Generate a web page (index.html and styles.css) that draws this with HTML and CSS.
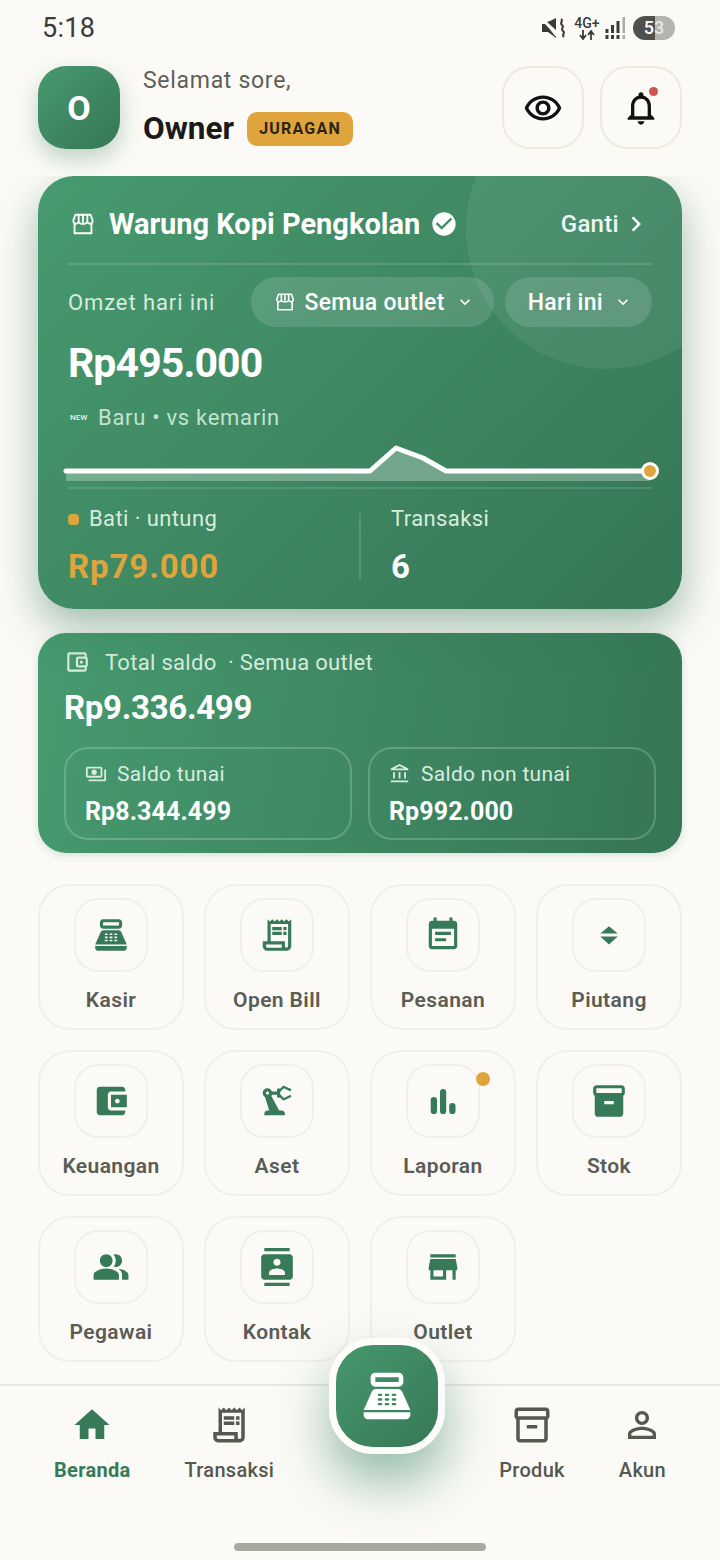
FILE: index.html
```html
<!DOCTYPE html>
<html lang="id">
<head>
    <meta charset="UTF-8">
    <meta name="viewport" content="width=device-width, initial-scale=1.0">
    <title>Beranda</title>
    <link rel="stylesheet" href="styles.css">
</head>
<body>
    <svg class="sprite" width="0" height="0">
        <symbol id="i-pos" viewBox="0 0 24 24"><path d="M17 2H7c-1.1 0-2 .9-2 2v2c0 1.1.9 2 2 2h10c1.1 0 2-.9 2-2V4c0-1.1-.9-2-2-2zm0 4H7V4h10v2zm3 16H4c-1.1 0-2-.9-2-2v-1h20v1c0 1.1-.9 2-2 2zm-1.47-11.81C18.21 9.47 17.49 9 16.7 9H7.3c-.79 0-1.51.47-1.83 1.19L2 18h20l-3.47-7.81zM9.5 16h-1c-.28 0-.5-.22-.5-.5s.22-.5.5-.5h1c.28 0 .5.22.5.5s-.22.5-.5.5zm0-2h-1c-.28 0-.5-.22-.5-.5s.22-.5.5-.5h1c.28 0 .5.22.5.5s-.22.5-.5.5zm0-2h-1c-.28 0-.5-.22-.5-.5s.22-.5.5-.5h1c.28 0 .5.22.5.5s-.22.5-.5.5zm3 4h-1c-.28 0-.5-.22-.5-.5s.22-.5.5-.5h1c.28 0 .5.22.5.5s-.22.5-.5.5zm0-2h-1c-.28 0-.5-.22-.5-.5s.22-.5.5-.5h1c.28 0 .5.22.5.5s-.22.5-.5.5zm0-2h-1c-.28 0-.5-.22-.5-.5s.22-.5.5-.5h1c.28 0 .5.22.5.5s-.22.5-.5.5zm3 4h-1c-.28 0-.5-.22-.5-.5s.22-.5.5-.5h1c.28 0 .5.22.5.5s-.22.5-.5.5zm0-2h-1c-.28 0-.5-.22-.5-.5s.22-.5.5-.5h1c.28 0 .5.22.5.5s-.22.5-.5.5zm0-2h-1c-.28 0-.5-.22-.5-.5s.22-.5.5-.5h1c.28 0 .5.22.5.5s-.22.5-.5.5z" fill-rule="evenodd"/></symbol>
        <symbol id="i-receipt" viewBox="0 0 24 24"><path d="M19.5 3.5L18 2l-1.5 1.5L15 2l-1.5 1.5L12 2l-1.5 1.5L9 2 7.5 3.5 6 2v14H3v3c0 1.66 1.34 3 3 3h12c1.66 0 3-1.34 3-3V2l-1.5 1.5zM15 20H6c-.55 0-1-.45-1-1v-1h10v2zm4-1c0 .55-.45 1-1 1s-1-.45-1-1v-3H8V5h11v14z"/><path d="M9 7h6v2H9zM16 7h2v2h-2zM9 10h6v2H9zM16 10h2v2h-2z"/></symbol>
        <symbol id="i-store" viewBox="0 0 24 24"><path d="M20 4H4v2h16V4zm1 10v-2l-1-5H4l-1 5v2h1v6h10v-6h4v6h2v-6h1zm-9 4H6v-4h6v4z"/></symbol>
        <symbol id="i-storefront" viewBox="0 0 24 24"><path d="M5 3.5h14l1.9 5.3c.3 1.7-1 3-2.4 3-1.1 0-2-.6-2.5-1.5-.5.9-1.5 1.5-2.6 1.5h-2.8c-1.1 0-2.1-.6-2.6-1.5-.5.9-1.4 1.5-2.5 1.5-1.4 0-2.7-1.3-2.4-3zM4.2 12v8.5h15.6V12M8 4v6M12 4v6.500M16 4v6" fill="none" stroke="currentColor" stroke-width="1.700" stroke-linejoin="round"/></symbol>
        <symbol id="i-inbox" viewBox="0 0 24 24"><path d="M20 2H4c-1 0-2 .9-2 2v3.010c0 .72.43 1.340 1 1.690V20c0 1.100 1.100 2 2 2h14c.9 0 2-.9 2-2V8.700c.57-.35 1-.97 1-1.690V4c0-1.100-1-2-2-2zm-1 18H5V9h14v11zm1-13H4V4h16v3zM9 12h6v2H9z"/></symbol>
    </svg>

    <div class="page">
        <div class="top">
            <div class="status-bar">
                <span class="clock">5:18</span>
                <div class="status-icons">
                    <svg class="ic-mute" viewBox="0 0 24 20"><path d="M0 6h3l11 11v3L6 14H0zM5 4l3-1 6-3v12z"/><path d="M1 1l13 17" stroke="#fbfaf6" stroke-width="1.500"/><path d="M19 1c3 2-2 4 1 6s-2 4 1 6-2 4 1 6" fill="none" stroke="#3a3a38" stroke-width="2"/></svg>
                    <div class="net">
                        <span class="net-type">4G+</span>
                        <svg class="ic-arrows" viewBox="0 0 16 10"><path d="M4 0v8M1 5l3 4 3-4M12 10V2M9 5l3-4 3 4" fill="none" stroke="#3a3a38" stroke-width="1.800"/></svg>
                    </div>
                    <svg class="ic-signal" viewBox="0 0 20 22"><rect x="0" y="12" width="3" height="4"/><rect x="0" y="18" width="3" height="4"/><rect x="5.500" y="8" width="3" height="8"/><rect x="5.500" y="18" width="3" height="4"/><rect x="11" y="4" width="3" height="12"/><rect x="11" y="18" width="3" height="4"/><rect x="17" y="0" width="2.500" height="16" fill="#a9a9a5"/><rect x="17" y="18" width="2.500" height="4" fill="#a9a9a5"/></svg>
                    <div class="battery"><span>5</span><span class="battery-low">3</span></div>
                </div>
            </div>

            <div class="header">
                <div class="avatar">O</div>
                <div class="greet">
                    <div class="greet-text">Selamat sore,</div>
                    <div class="greet-name">
                        <span class="owner">Owner</span>
                        <span class="badge">JURAGAN</span>
                    </div>
                </div>
                <div class="head-btn">
                    <svg viewBox="0 0 24 24"><path d="M12 6.500c3.790 0 7.170 2.130 8.820 5.500-1.650 3.370-5.020 5.500-8.820 5.500S4.830 15.370 3.180 12C4.830 8.630 8.210 6.500 12 6.500m0-2C7 4.500 2.730 7.610 1 12c1.730 4.390 6 7.500 11 7.500s9.270-3.110 11-7.500c-1.730-4.390-6-7.500-11-7.500zm0 5c1.380 0 2.500 1.120 2.500 2.500s-1.120 2.500-2.500 2.500-2.500-1.120-2.500-2.500 1.120-2.500 2.500-2.500m0-2c-2.480 0-4.500 2.020-4.500 4.500s2.020 4.500 4.500 4.500 4.500-2.020 4.500-4.500-2.020-4.500-4.500-4.500z"/></svg>
                </div>
                <div class="head-btn">
                    <svg viewBox="0 0 24 24"><path d="M12 22c1.100 0 2-.9 2-2h-4c0 1.100.9 2 2 2zm6-6v-5c0-3.070-1.630-5.640-4.500-6.320V4c0-.83-.67-1.500-1.500-1.500s-1.500.67-1.500 1.500v.68C7.640 5.360 6 7.920 6 11v5l-2 2v1h16v-1l-2-2zm-2 1H8v-6c0-2.480 1.510-4.500 4-4.500s4 2.020 4 4.500v6z"/></svg>
                    <span class="bell-dot"></span>
                </div>
            </div>
        </div>

        <div class="hero">
            <div class="hero-circle"></div>
            <div class="hero-top">
                <svg class="ic-26"><use href="#i-storefront"/></svg>
                <span class="shop-name">Warung Kopi Pengkolan</span>
                <svg class="ic-check" viewBox="0 0 24 24"><path d="M12 2C6.480 2 2 6.480 2 12s4.480 10 10 10 10-4.480 10-10S17.520 2 12 2zm-2 15l-5-5 1.410-1.410L10 14.170l7.590-7.590L19 8l-9 9z"/></svg>
                <span class="ganti">Ganti</span>
                <svg class="ic-chev" viewBox="0 0 24 24"><path d="M10 6L8.590 7.410 13.170 12l-4.580 4.590L10 18l6-6z"/></svg>
            </div>
            <div class="hero-filter">
                <span class="omzet">Omzet hari ini</span>
                <div class="pill">
                    <svg class="ic-22"><use href="#i-storefront"/></svg>
                    <span>Semua outlet</span>
                    <svg class="ic-down" viewBox="0 0 24 24"><path d="M16.590 8.590L12 13.170 7.410 8.590 6 10l6 6 6-6z"/></svg>
                </div>
                <div class="pill">
                    <span>Hari ini</span>
                    <svg class="ic-down" viewBox="0 0 24 24"><path d="M16.590 8.590L12 13.170 7.410 8.590 6 10l6 6 6-6z"/></svg>
                </div>
            </div>
            <div class="omzet-val">Rp495.000</div>
            <div class="compare"><span class="new-tag">NEW</span><span>Baru • vs kemarin</span></div>
            <svg class="spark" viewBox="0 0 600 44">
                <path d="M3 28H307L333 5 360 15 383 28H587V38H3z" fill="#fff" fill-opacity=".28"/>
                <path d="M3 28H307L333 5 360 15 383 28H587" fill="none" stroke="#fff" stroke-width="5" stroke-linecap="round" stroke-linejoin="round"/>
                <circle cx="587" cy="28" r="7.500" fill="#e0a43c" stroke="#fff" stroke-width="3"/>
            </svg>
            <div class="hero-stats">
                <div class="stat">
                    <div class="stat-label"><span class="gold-dot"></span>Bati · untung</div>
                    <div class="stat-val gold">Rp79.000</div>
                </div>
                <div class="stat stat-right">
                    <div class="stat-label">Transaksi</div>
                    <div class="stat-val">6</div>
                </div>
            </div>
        </div>

        <div class="saldo">
            <div class="saldo-top">
                <svg class="ic-26" viewBox="0 0 24 24"><path d="M21 7.280V5c0-1.100-.9-2-2-2H5c-1.110 0-2 .9-2 2v14c0 1.100.89 2 2 2h14c1.100 0 2-.9 2-2v-2.280c.59-.35 1-.98 1-1.720V9c0-.74-.41-1.370-1-1.720zM20 9v6h-7V9h7zM5 19V5h14v2h-6c-1.100 0-2 .9-2 2v6c0 1.100.9 2 2 2h6v2H5z"/><circle cx="16" cy="12" r="1.500"/></svg>
                <span>Total saldo &nbsp;· Semua outlet</span>
            </div>
            <div class="saldo-val">Rp9.336.499</div>
            <div class="saldo-row">
                <div class="saldo-box">
                    <div class="box-label">
                        <svg class="ic-22" viewBox="0 0 24 24"><path d="M19 14V6c0-1.100-.9-2-2-2H3c-1.100 0-2 .9-2 2v8c0 1.100.9 2 2 2h14c1.100 0 2-.9 2-2zm-2 0H3V6h14v8zm-7-7c-1.660 0-3 1.340-3 3s1.340 3 3 3 3-1.340 3-3-1.340-3-3-3zm13 0v11c0 1.100-.9 2-2 2H4v-2h17V7h2z"/></svg>
                        <span>Saldo tunai</span>
                    </div>
                    <div class="box-val">Rp8.344.499</div>
                </div>
                <div class="saldo-box">
                    <div class="box-label">
                        <svg class="ic-22" viewBox="0 0 24 24"><path d="M6.500 10h-2v7h2v-7zm6 0h-2v7h2v-7zm8.500 9H2v2h19v-2zm-2.500-9h-2v7h2v-7zm-7-6.740L16.710 6H6.290l5.210-2.740m0-2.260L2 6v2h19V6l-9.500-5z"/></svg>
                        <span>Saldo non tunai</span>
                    </div>
                    <div class="box-val">Rp992.000</div>
                </div>
            </div>
        </div>

        <div class="menu">
            <div class="menu-item"><div class="menu-icon"><svg><use href="#i-pos"/></svg></div><span>Kasir</span></div>
            <div class="menu-item"><div class="menu-icon"><svg><use href="#i-receipt"/></svg></div><span>Open Bill</span></div>
            <div class="menu-item"><div class="menu-icon"><svg viewBox="0 0 24 24"><path d="M17 10H7v2h10v-2zm2-7h-1V1h-2v2H8V1H6v2H5c-1.110 0-1.990.9-1.990 2L3 19c0 1.100.89 2 2 2h14c1.100 0 2-.9 2-2V5c0-1.100-.9-2-2-2zm0 16H5V8h14v11zm-5-5H7v2h7v-2z"/></svg></div><span>Pesanan</span></div>
            <div class="menu-item"><div class="menu-icon"><svg viewBox="0 0 24 24"><path d="M12 6.500l5.500 4.500h-11zM12 18l-5.500-5h11z"/></svg></div><span>Piutang</span></div>
            <div class="menu-item"><div class="menu-icon"><svg viewBox="0 0 24 24"><path d="M21 18v1c0 1.100-.9 2-2 2H5c-1.110 0-2-.9-2-2V5c0-1.100.89-2 2-2h14c1.100 0 2 .9 2 2v1h-9c-1.110 0-2 .9-2 2v8c0 1.100.89 2 2 2h9zm-9-2h10V8H12v8zm4-2.500c-.83 0-1.500-.67-1.500-1.500s.67-1.500 1.500-1.500 1.500.67 1.500 1.500-.67 1.500-1.500 1.500z"/></svg></div><span>Keuangan</span></div>
            <div class="menu-item"><div class="menu-icon"><svg viewBox="0 0 24 24"><path d="M19.930 8.350l-3.600 1.680L14 7.700V6.300l2.330-2.330 3.600 1.680c.38.18.82.01 1-.36.18-.38.01-.82-.36-1l-3.920-1.830c-.38-.18-.83-.1-1.130.2L13.780 4.400c-.18-.24-.46-.4-.78-.4-.55 0-1 .45-1 1v1H8.820C8.400 4.840 7.300 4 6 4 4.340 4 3 5.340 3 7c0 1.100.6 2.050 1.480 2.580L7.080 18H6c-1.100 0-2 .9-2 2v1h13v-1c0-1.100-.9-2-2-2h-1.620L8.410 8.770c.17-.24.31-.49.41-.77H12v1c0 .55.45 1 1 1 .32 0 .6-.16.78-.4l1.740 1.740c.3.3.75.38 1.130.2l3.920-1.830c.38-.18.54-.62.36-1-.18-.37-.62-.54-1-.36zM6 8c-.55 0-1-.45-1-1s.45-1 1-1 1 .45 1 1-.45 1-1 1z"/></svg></div><span>Aset</span></div>
            <div class="menu-item"><div class="menu-icon"><svg viewBox="0 0 38 38"><rect x="6.700" y="15" width="6.300" height="17" rx="3.100"/><rect x="16" y="7" width="6.200" height="25" rx="3.100"/><rect x="25.200" y="21" width="6.300" height="11" rx="3.100"/></svg></div><span>Laporan</span><i class="menu-dot"></i></div>
            <div class="menu-item"><div class="menu-icon"><svg viewBox="0 0 24 24"><path d="M20 2H4c-1 0-2 .9-2 2v3.010c0 .72.43 1.340 1 1.690V20c0 1.100 1.100 2 2 2h14c.9 0 2-.9 2-2V8.700c.57-.35 1-.97 1-1.690V4c0-1.100-1-2-2-2zm-5 12H9v-2h6v2zm5-7H4V4l16-.02V7z"/></svg></div><span>Stok</span></div>
            <div class="menu-item"><div class="menu-icon"><svg viewBox="0 0 24 24"><path d="M16.670 13.130C18.040 14.060 19 15.320 19 17v3h4v-3c0-2.180-3.570-3.470-6.330-3.870zM15 12c2.210 0 4-1.790 4-4s-1.790-4-4-4c-.47 0-.91.1-1.330.24C14.500 5.270 15 6.580 15 8s-.5 2.730-1.330 3.760c.42.14.86.24 1.330.24zM9 12c2.210 0 4-1.790 4-4s-1.790-4-4-4-4 1.790-4 4 1.790 4 4 4zM9 13c-2.670 0-8 1.340-8 4v3h16v-3c0-2.660-5.330-4-8-4z"/></svg></div><span>Pegawai</span></div>
            <div class="menu-item"><div class="menu-icon"><svg viewBox="0 0 24 24"><path d="M20 0H4v2h16V0zM4 24h16v-2H4v2zM20 4H4c-1.100 0-2 .9-2 2v12c0 1.100.9 2 2 2h16c1.100 0 2-.9 2-2V6c0-1.100-.9-2-2-2zm-8 2.750c1.240 0 2.250 1.010 2.250 2.250s-1.010 2.250-2.250 2.250S9.750 10.240 9.750 9 10.760 6.750 12 6.750zM17 17H7v-1.500c0-1.670 3.330-2.500 5-2.500s5 .83 5 2.500V17z"/></svg></div><span>Kontak</span></div>
            <div class="menu-item"><div class="menu-icon"><svg><use href="#i-store"/></svg></div><span>Outlet</span></div>
        </div>

        <div class="nav">
            <div class="nav-item active">
                <svg viewBox="0 0 24 24"><path d="M10 20v-6h4v6h5v-8h3L12 3 2 12h3v8z"/></svg>
                <span>Beranda</span>
            </div>
            <div class="nav-item">
                <svg><use href="#i-receipt"/></svg>
                <span>Transaksi</span>
            </div>
            <div class="nav-gap"></div>
            <div class="nav-item">
                <svg><use href="#i-inbox"/></svg>
                <span>Produk</span>
            </div>
            <div class="nav-item">
                <svg viewBox="0 0 24 24"><path d="M12 5.900c1.160 0 2.100.94 2.100 2.100s-.94 2.100-2.100 2.100S9.900 9.160 9.900 8s.94-2.100 2.100-2.100m0 9c2.970 0 6.100 1.460 6.100 2.100v1.100H5.900V17c0-.64 3.130-2.100 6.100-2.100M12 4C9.790 4 8 5.790 8 8s1.790 4 4 4 4-1.790 4-4-1.790-4-4-4zm0 9c-2.670 0-8 1.340-8 4v3h16v-3c0-2.660-5.330-4-8-4z"/></svg>
                <span>Akun</span>
            </div>
            <div class="fab"><svg><use href="#i-pos"/></svg></div>
        </div>
        <div class="home-bar"></div>
    </div>
</body>
</html>
```

FILE: styles.css
```css
* {
    box-sizing: border-box;
}
body {
    margin: 0;
    background: #fbfaf6;
    font-family: Roboto, "Noto Sans", sans-serif;
    color: #fff;
}
.sprite {
    position: absolute;
}
svg {
    fill: currentColor;
    flex-shrink: 0;
}
.page {
    width: 720px;
    height: 1560px;
    overflow: hidden;
    display: flex;
    flex-direction: column;
}
/* covers the top of the hero shadow */
.top {
    position: relative;
    z-index: 1;
    background: #fbfaf6;
}

/* status bar */
.status-bar {
    height: 56px;
    padding: 0 45px 0 42px;
    display: flex;
    justify-content: space-between;
    align-items: center;
    color: #3a3a38;
}
.clock {
    font-size: 27px;
    letter-spacing: .3px;
}
.status-icons {
    display: flex;
    align-items: center;
}
.ic-mute {
    width: 24px;
    height: 20px;
}
.net {
    display: flex;
    flex-direction: column;
    align-items: center;
    width: 28px;
    margin: 0 3px 0 7px;
}
.net-type {
    font-size: 14px;
    font-weight: 500;
    line-height: 12px;
}
.ic-arrows {
    width: 16px;
    height: 10px;
    margin-top: 1px;
}
.ic-signal {
    width: 21px;
    height: 22px;
    margin: 0 7px 0 1px;
}
.battery {
    width: 42px;
    height: 24px;
    border-radius: 12px;
    background: linear-gradient(90deg, #50504e 0 53%, #b4b4b0 53%);
    font-size: 18px;
    font-weight: 500;
    text-align: center;
    line-height: 24px;
    color: #fff;
}
.battery-low {
    color: #e8e8e4;
}

/* header */
.header {
    height: 120px;
    padding: 10px 38px 0;
    display: flex;
    align-items: flex-start;
}
.avatar {
    width: 82px;
    height: 83px;
    border-radius: 28px;
    background: linear-gradient(135deg, #479a6f, #367655);
    box-shadow: 0 10px 22px rgba(54, 118, 85, .3);
    display: flex;
    align-items: center;
    justify-content: center;
    font-size: 34px;
    font-weight: 700;
}
.greet {
    margin-left: 23px;
    flex: 1;
}
.greet-text {
    font-size: 23px;
    line-height: 28px;
    margin-top: 1px;
    color: #5d5f58;
    letter-spacing: .7px;
}
.greet-name {
    display: flex;
    align-items: center;
    margin-top: 17px;
    gap: 13px;
}
.owner {
    font-size: 31.500px;
    font-weight: 700;
    line-height: 34px;
    color: #1a1a18;
}
.badge {
    height: 34px;
    width: 106px;
    border-radius: 10px;
    background: #e0a43c;
    color: #2a2416;
    font-size: 16px;
    font-weight: 700;
    letter-spacing: 1.200px;
    text-align: center;
    line-height: 34px;
}
.head-btn {
    position: relative;
    width: 82px;
    height: 83px;
    margin-left: 16px;
    border: 2px solid #f0e9dd;
    border-radius: 28px;
    display: flex;
    align-items: center;
    justify-content: center;
    color: #111;
}
.head-btn svg {
    width: 40px;
    height: 40px;
}
.bell-dot {
    position: absolute;
    top: 19px;
    right: 22px;
    width: 9px;
    height: 9px;
    border-radius: 50%;
    background: #d0534f;
}

/* omzet card */
.hero {
    position: relative;
    overflow: hidden;
    margin: 0 38px;
    height: 433px;
    padding: 30px 30px 0;
    border-radius: 36px;
    background: linear-gradient(135deg, #479a6f, #367655);
    box-shadow: 0 18px 40px rgba(54, 118, 85, .45);
    flex-shrink: 0;
}
.hero-circle {
    position: absolute;
    top: -87px;
    right: -64px;
    width: 280px;
    height: 280px;
    border-radius: 50%;
    background: rgba(255, 255, 255, .07);
}
.hero-top {
    position: relative;
    display: flex;
    align-items: center;
    height: 35px;
    padding-left: 2px;
    padding-right: 8px;
}
.ic-26 {
    width: 26px;
    height: 26px;
}
.ic-22 {
    width: 22px;
    height: 22px;
}
.shop-name {
    margin-left: 13px;
    font-size: 29px;
    font-weight: 700;
}
.ic-check {
    width: 28px;
    height: 28px;
    margin-left: 10px;
}
.ganti {
    margin-left: auto;
    font-size: 24px;
    font-weight: 500;
    letter-spacing: .3px;
    color: #eef6f1;
}
.ic-chev {
    width: 30px;
    height: 30px;
    margin-left: 2px;
    margin-right: -7px;
}
.hero-filter {
    position: relative;
    display: flex;
    align-items: center;
    margin-top: 22px;
    padding-top: 12px;
    border-top: 2px solid rgba(255, 255, 255, .13);
}
.omzet {
    flex: 1;
    font-size: 22px;
    letter-spacing: .9px;
    color: #d7ecdf;
}
.pill {
    height: 50px;
    margin-left: 11px;
    padding: 0 19px 0 23px;
    border-radius: 25px;
    background: rgba(255, 255, 255, .13);
    display: flex;
    align-items: center;
    gap: 9px;
    font-size: 23px;
    font-weight: 500;
    letter-spacing: .3px;
}
.ic-down {
    width: 20px;
    height: 20px;
    margin-left: 1px;
}
.omzet-val {
    position: relative;
    margin-top: 12px;
    font-size: 41px;
    font-weight: 700;
    line-height: 48px;
    letter-spacing: -.9px;
}
.compare {
    display: flex;
    align-items: center;
    margin-top: 16px;
    line-height: 30px;
    font-size: 22px;
    letter-spacing: .7px;
    color: #c3e3d0;
}
.new-tag {
    width: 28px;
    margin-left: 2px;
    font-size: 8px;
    font-weight: 500;
    letter-spacing: 0;
    color: #e4f2ea;
}
.spark {
    display: block;
    width: 600px;
    height: 44px;
    margin: 10px 0 0 -5px;
    overflow: visible;
}
.hero-stats {
    display: flex;
    padding-top: 24px;
    border-top: 2px solid rgba(255, 255, 255, .12);
    height: 104px;
}
.stat {
    flex: 0 0 291px;
}
.stat-right {
    flex: 1;
    padding-left: 30px;
    border-left: 2px solid rgba(255, 255, 255, .14);
    height: 67px;
}
.stat-label {
    display: flex;
    align-items: center;
    height: 12px;
    font-size: 22px;
    line-height: 10px;
    letter-spacing: .4px;
    color: #d7ecdf;
}
.gold-dot {
    width: 11px;
    height: 11px;
    margin-right: 10px;
    border-radius: 4px;
    background: #e0a43c;
}
.stat-val {
    margin-top: 22px;
    font-size: 33px;
    font-weight: 700;
    line-height: 40px;
    letter-spacing: .9px;
}
.gold {
    color: #e0a43c;
}

/* saldo card */
.saldo {
    margin: 24px 38px 0;
    height: 220px;
    padding: 15px 26px 0;
    border-radius: 28px;
    background: linear-gradient(100deg, #479a6f, #367655);
    box-shadow: 0 2px 8px rgba(54, 118, 85, .2);
    flex-shrink: 0;
}
.saldo-top {
    display: flex;
    align-items: center;
    gap: 15px;
    height: 28px;
    font-size: 22px;
    letter-spacing: .3px;
    color: #d7ecdf;
}
.saldo-val {
    margin-top: 11px;
    font-size: 33px;
    font-weight: 700;
    line-height: 42px;
    letter-spacing: -.3px;
}
.saldo-row {
    display: flex;
    gap: 16px;
    margin-top: 18px;
}
.saldo-box {
    flex: 1;
    height: 93px;
    padding: 12px 19px 0;
    border: 2px solid rgba(255, 255, 255, .2);
    border-radius: 24px;
}
.box-label {
    display: flex;
    align-items: center;
    gap: 10px;
    height: 26px;
    font-size: 21px;
    letter-spacing: .3px;
    color: #d7ecdf;
}
.box-val {
    margin-top: 10px;
    font-size: 25px;
    font-weight: 700;
    line-height: 30px;
    letter-spacing: .1px;
}

/* menu grid */
.menu {
    display: grid;
    grid-template-columns: repeat(4, 146px);
    grid-auto-rows: 146px;
    gap: 20px;
    margin: 31px 38px 0;
}
.menu-item {
    position: relative;
    display: flex;
    flex-direction: column;
    align-items: center;
    padding-top: 12px;
    border: 2px solid #f2efe9;
    border-radius: 32px;
    font-size: 21px;
    font-weight: 600;
    letter-spacing: .4px;
    color: #5a5c55;
}
.menu-icon {
    width: 74px;
    height: 74px;
    margin-bottom: 16px;
    border: 2px solid #f2efe9;
    border-radius: 24px;
    display: flex;
    align-items: center;
    justify-content: center;
    color: #367a58;
}
.menu-icon svg {
    width: 38px;
    height: 38px;
}
.menu-dot {
    position: absolute;
    top: 20px;
    right: 24px;
    width: 14px;
    height: 14px;
    border-radius: 50%;
    background: #e0a43c;
}

/* bottom nav */
.nav {
    position: relative;
    display: flex;
    gap: 54px;
    margin-top: auto;
    height: 159px;
    padding: 18px 0 0 54px;
    border-top: 2px solid #e9e6dd;
}
.nav-item {
    display: flex;
    flex-direction: column;
    align-items: center;
    font-size: 20px;
    font-weight: 500;
    letter-spacing: .3px;
    color: #55584f;
}
.nav-item svg {
    width: 42px;
    height: 42px;
    margin-bottom: 12px;
}
.nav-item.active {
    color: #367a58;
    font-weight: 700;
}
.nav-gap {
    width: 117px;
}
.fab {
    position: absolute;
    top: -48px;
    left: 329px;
    width: 116px;
    height: 116px;
    border: 7px solid #fdfcf9;
    border-radius: 44px;
    background: linear-gradient(135deg, #479a6f, #367655);
    background-origin: border-box;
    box-shadow: 0 28px 50px rgba(54, 130, 95, .5);
    display: flex;
    align-items: center;
    justify-content: center;
}
.fab svg {
    width: 56px;
    height: 56px;
}
.home-bar {
    width: 252px;
    height: 8px;
    margin: 0 auto 9px;
    border-radius: 4px;
    background: #a9a8a3;
    flex-shrink: 0;
}
```
